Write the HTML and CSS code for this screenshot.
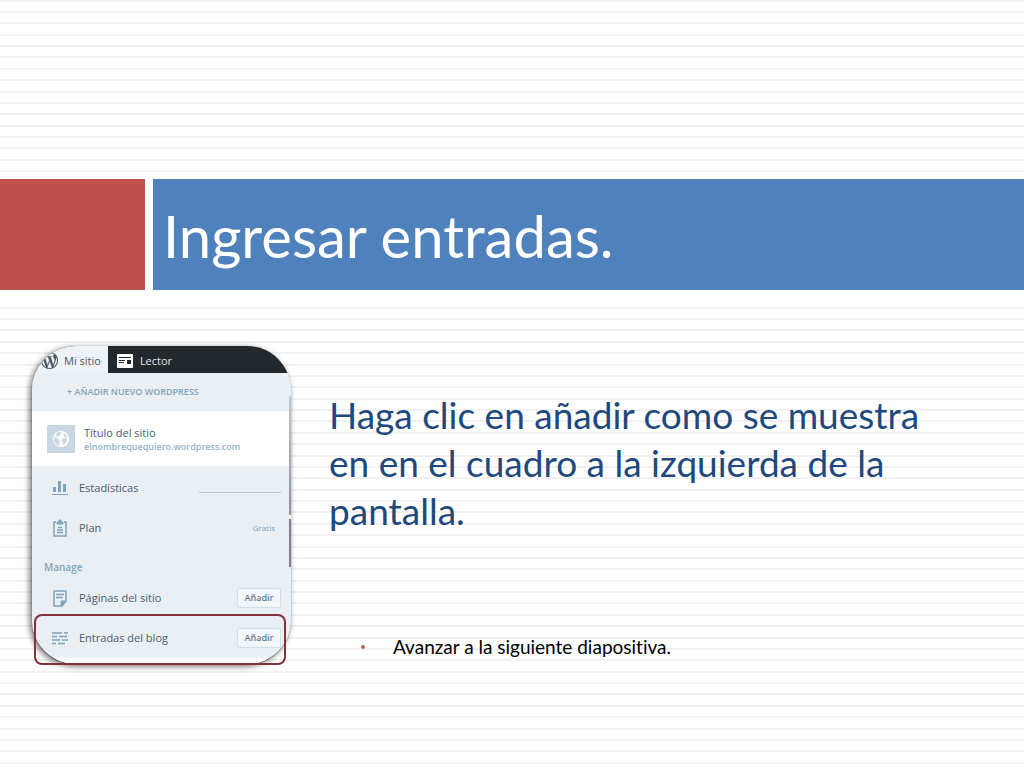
FILE: index.html
```html
<!DOCTYPE html>
<html lang="es">
<head>
    <meta charset="UTF-8" />
    <meta name="viewport" content="width=device-width, initial-scale=1" />
    <title>Ingresar entradas</title>
    <link rel="stylesheet" href="styles.css">
</head>
<body>
    <header class="banner">
        <div class="banner-accent"></div>
        <h1 class="banner-title">Ingresar entradas.</h1>
    </header>

    <main class="content">
        <div class="panel-wrap">
            <div class="panel">
                <nav class="tabs">
                    <a href="#" class="tab active">
                        <svg viewBox="0 0 24 24" width="17" height="17" fill="currentColor" stroke="currentColor" stroke-width="0.3" aria-hidden="true">
                            <path d="M21.469 6.825c.84 1.537 1.318 3.3 1.318 5.175 0 3.979-2.156 7.456-5.363 9.325l3.295-9.527c.615-1.54.82-2.771.82-3.864 0-.405-.026-.78-.07-1.11m-7.981.105c.647-.03 1.232-.105 1.232-.105.582-.075.514-.93-.067-.899 0 0-1.755.135-2.88.135-1.064 0-2.85-.15-2.85-.15-.585-.03-.661.855-.075.885 0 0 .54.061 1.125.09l1.68 4.605-2.37 7.08L5.354 6.9c.649-.03 1.234-.1 1.234-.1.585-.075.516-.93-.065-.896 0 0-1.746.138-2.874.138-.2 0-.438-.008-.69-.015C4.911 3.15 8.235 1.215 12 1.215c2.809 0 5.365 1.072 7.286 2.833-.046-.003-.091-.009-.141-.009-1.06 0-1.812.923-1.812 1.914 0 .89.513 1.643 1.06 2.531.411.72.89 1.643.89 2.977 0 .915-.354 1.994-.821 3.479l-1.075 3.585-3.9-11.61.001.014zM12 22.784c-1.059 0-2.081-.153-3.048-.437l3.237-9.406 3.315 9.087c.024.053.05.101.078.149-1.12.393-2.325.609-3.582.609M1.211 12c0-1.564.336-3.05.935-4.39L7.29 21.709C3.694 19.96 1.212 16.271 1.211 12M12 0C5.385 0 0 5.385 0 12s5.385 12 12 12 12-5.385 12-12S18.615 0 12 0"/>
                        </svg>
                        Mi sitio
                    </a>
                    <a href="#" class="tab">
                        <svg viewBox="0 0 16 14" width="16" height="14" aria-hidden="true">
                            <rect width="16" height="14" rx="1" fill="#fff"/>
                            <path d="M2 3.5h12M2 6.500h6M2 8.500h5" stroke="#23282d" stroke-width="1"/>
                            <rect x="10" y="6" width="4" height="4" fill="#23282d"/>
                        </svg>
                        Lector
                    </a>
                </nav>
                <a href="#" class="add-site">+ AÑADIR NUEVO WORDPRESS</a>
                <div class="site">
                    <div class="site-icon">
                        <svg viewBox="0 0 18 18" width="18" height="18" aria-hidden="true">
                            <circle cx="9" cy="9" r="8" fill="#fff"/>
                            <path d="M2 7l3 1 2 2 1 2-1 2 0 2-3-2-2-3zM6 2l3 0 0 2-2 2-2 1-1-2zM12 3l3 3 0 2-2-1-2-2zM10 9l3-1 2 1 0 2-2 3-2 1 0-3-2-1z" fill="#c8d7e1"/>
                        </svg>
                    </div>
                    <div>
                        <div class="site-title">Título del sitio</div>
                        <div class="site-url">elnombrequequiero.wordpress.com</div>
                    </div>
                </div>
                <ul class="menu">
                    <li class="menu-item">
                        <svg viewBox="0 0 16 16" width="16" height="16" aria-hidden="true">
                            <path d="M1 7h3v5H1zM6 1h3v11H6zM11 4h3v8h-3zM0 14h16v1H0z" fill="#7fa4bd"/>
                        </svg>
                        <a href="#">Estadísticas</a>
                        <span class="sparkline"></span>
                    </li>
                    <li class="menu-item">
                        <svg viewBox="0 0 16 18" width="16" height="18" fill="none" stroke="#7fa4bd" aria-hidden="true">
                            <path d="M4 3H2v14h12V3h-2" stroke-width="1.500"/>
                            <path d="M5 5V3h2V1h2v2h2v2z" fill="#7fa4bd"/>
                            <path d="M6 8.500h4M5 11h6M5 13.500h6" stroke-width="1.300"/>
                        </svg>
                        <a href="#">Plan</a>
                        <span class="plan-name">Gratis</span>
                    </li>
                </ul>
                <h2 class="menu-heading">Manage</h2>
                <ul class="menu">
                    <li class="menu-item">
                        <svg viewBox="0 0 16 18" width="16" height="18" fill="none" stroke="#7fa4bd" aria-hidden="true">
                            <path d="M2 2h12v10l-4 5H2z" stroke-width="1.500"/>
                            <path d="M9 17v-5h5z" fill="#7fa4bd"/>
                            <path d="M4 5.500h8M4 8.500h7" stroke-width="1.300"/>
                        </svg>
                        <a href="#">Páginas del sitio</a>
                        <button type="button" class="add-btn">Añadir</button>
                    </li>
                    <li class="menu-item">
                        <svg viewBox="0 0 16 14" width="16" height="14" fill="none" stroke="#7fa4bd" stroke-width="1.500" aria-hidden="true">
                            <path d="M0 2h10M12 2h4M0 5.500h5M7 5.500h8M0 9h8M10 9h6M0 12.500h4M6 12.500h7"/>
                        </svg>
                        <a href="#">Entradas del blog</a>
                        <button type="button" class="add-btn">Añadir</button>
                    </li>
                </ul>
            </div>
            <div class="scrollbar"></div>
            <div class="highlight"></div>
        </div>

        <div class="text">
            <p class="lead">Haga clic en añadir como se muestra en en el cuadro a la izquierda de la pantalla.</p>
            <ul class="steps">
                <li>Avanzar a la siguiente diapositiva.</li>
            </ul>
        </div>
    </main>
</body>
</html>
```
FILE: styles.css
```css
* {
    box-sizing: border-box;
}
body {
    margin: 0;
    padding-top: 173px;
    min-height: 100vh;
    font-family: Lato, sans-serif;
    font-variant-ligatures: none;
    /* ruled paper, eight lines per tile */
    background: #fff linear-gradient(
        #f1f1f1 0 2px, #fff 2px 11px,
        #f1f1f1 11px 13px, #fff 13px 22px,
        #f1f1f1 22px 24px, #fff 24px 34px,
        #f1f1f1 34px 36px, #fff 36px 45px,
        #f1f1f1 45px 47px, #fff 47px 56px,
        #f1f1f1 56px 58px, #fff 58px 68px,
        #f1f1f1 68px 70px, #fff 70px 79px,
        #f1f1f1 79px 81px, #fff 81px) 0 0 / 100% 91px;
}
a {
    color: inherit;
    text-decoration: none;
}
ul {
    list-style: none;
    margin: 0;
    padding: 0;
}

/* Banner */
.banner {
    display: flex;
    gap: 8px;
    padding: 6px 0 12px;
    background: #fff;
}
.banner-accent {
    width: 145px;
    background: #c0504d;
}
.banner-title {
    flex: 1;
    margin: 0;
    padding: 17px 10px 14px;
    background: #4f81bd;
    color: #fff;
    font-size: 58px;
    font-weight: 400;
    line-height: 80px;
}

.content {
    display: flex;
    align-items: flex-start;
    gap: 38px;
    padding: 44px 96px 96px 32px;
}

/* WordPress panel */
.panel-wrap {
    position: relative;
    flex: 0 0 259px;
}
.panel {
    overflow: hidden;
    padding-bottom: 8px;
    border-radius: 44px;
    background: linear-gradient(#e9eff3 0 310px, #fff 314px);
    box-shadow: -2px 2px 6px rgba(0, 0, 0, 0.6), 0 1px 1px rgba(0, 0, 0, 0.4);
    color: #4a5c6b;
    font-family: "Open Sans", sans-serif;
    font-size: 11px;
}
.tabs {
    display: flex;
    height: 27px;
    background: #23282d;
}
.tab {
    display: flex;
    align-items: center;
    gap: 7px;
    padding: 2px 9px 0;
    color: #dfe6ea;
}
.tab.active {
    gap: 6px;
    padding-right: 7px;
    background: #eef3f8;
    color: #4a5560;
}
.add-site {
    display: block;
    padding-left: 35px;
    color: #7fa4bd;
    font-size: 9px;
    font-weight: 600;
    line-height: 38px;
}
.site {
    display: flex;
    align-items: center;
    gap: 9px;
    height: 55px;
    padding-left: 15px;
    background: #fff;
}
.site-icon {
    display: flex;
    align-items: center;
    justify-content: center;
    width: 28px;
    height: 28px;
    background: #c8d7e1;
}
.site-title {
    font-size: 11px;
    line-height: 16px;
}
.site-url {
    color: #94b3c7;
    font-size: 9px;
    font-weight: 600;
    line-height: 12px;
}
.menu-item {
    display: flex;
    align-items: center;
    gap: 11px;
    height: 40px;
    padding: 3px 10px 0 20px;
}
.sparkline {
    width: 82px;
    height: 1px;
    margin: 10px 0 0 auto;
    background: #b4c8d8;
}
.plan-name {
    margin: 0 6px 0 auto;
    color: #7fa4bd;
    font-size: 8px;
}
.menu-heading {
    margin: 0;
    padding: 13px 12px 1px;
    color: #7fa4bd;
    font-size: 10px;
    font-weight: 600;
    line-height: 16px;
}
.add-btn {
    width: 44px;
    height: 20px;
    margin-left: auto;
    padding: 0;
    border: 1px solid #d3dfe8;
    border-radius: 2px;
    background: #f3f6f8;
    color: #5f7d92;
    font-family: inherit;
    font-size: 9px;
    font-weight: 600;
}
/* two-part bar on the panel's right edge */
.scrollbar {
    position: absolute;
    top: 50px;
    right: 0;
    width: 2px;
    height: 171px;
    background: linear-gradient(#c4c9cd 0, #8e9296 119px, #fff 119px 123px, #7e8286 123px);
}
/* frame laid over the last row */
.highlight {
    position: absolute;
    right: 5px;
    bottom: -1px;
    left: 2px;
    height: 51px;
    border: 2px solid #86303a;
    border-radius: 8px;
    pointer-events: none;
}

/* Slide text */
.text {
    flex: 1;
    padding-top: 45px;
}
.lead {
    margin: 0 0 100px;
    color: #1f497d;
    font-size: 37px;
    line-height: 48px;
}
.steps li {
    display: flex;
    align-items: center;
    padding-left: 32px;
    font-size: 19px;
    line-height: 24px;
}
.steps li::before {
    content: "";
    width: 4px;
    height: 4px;
    margin-right: 28px;
    border-radius: 50%;
    background: #c0605d;
}
```
